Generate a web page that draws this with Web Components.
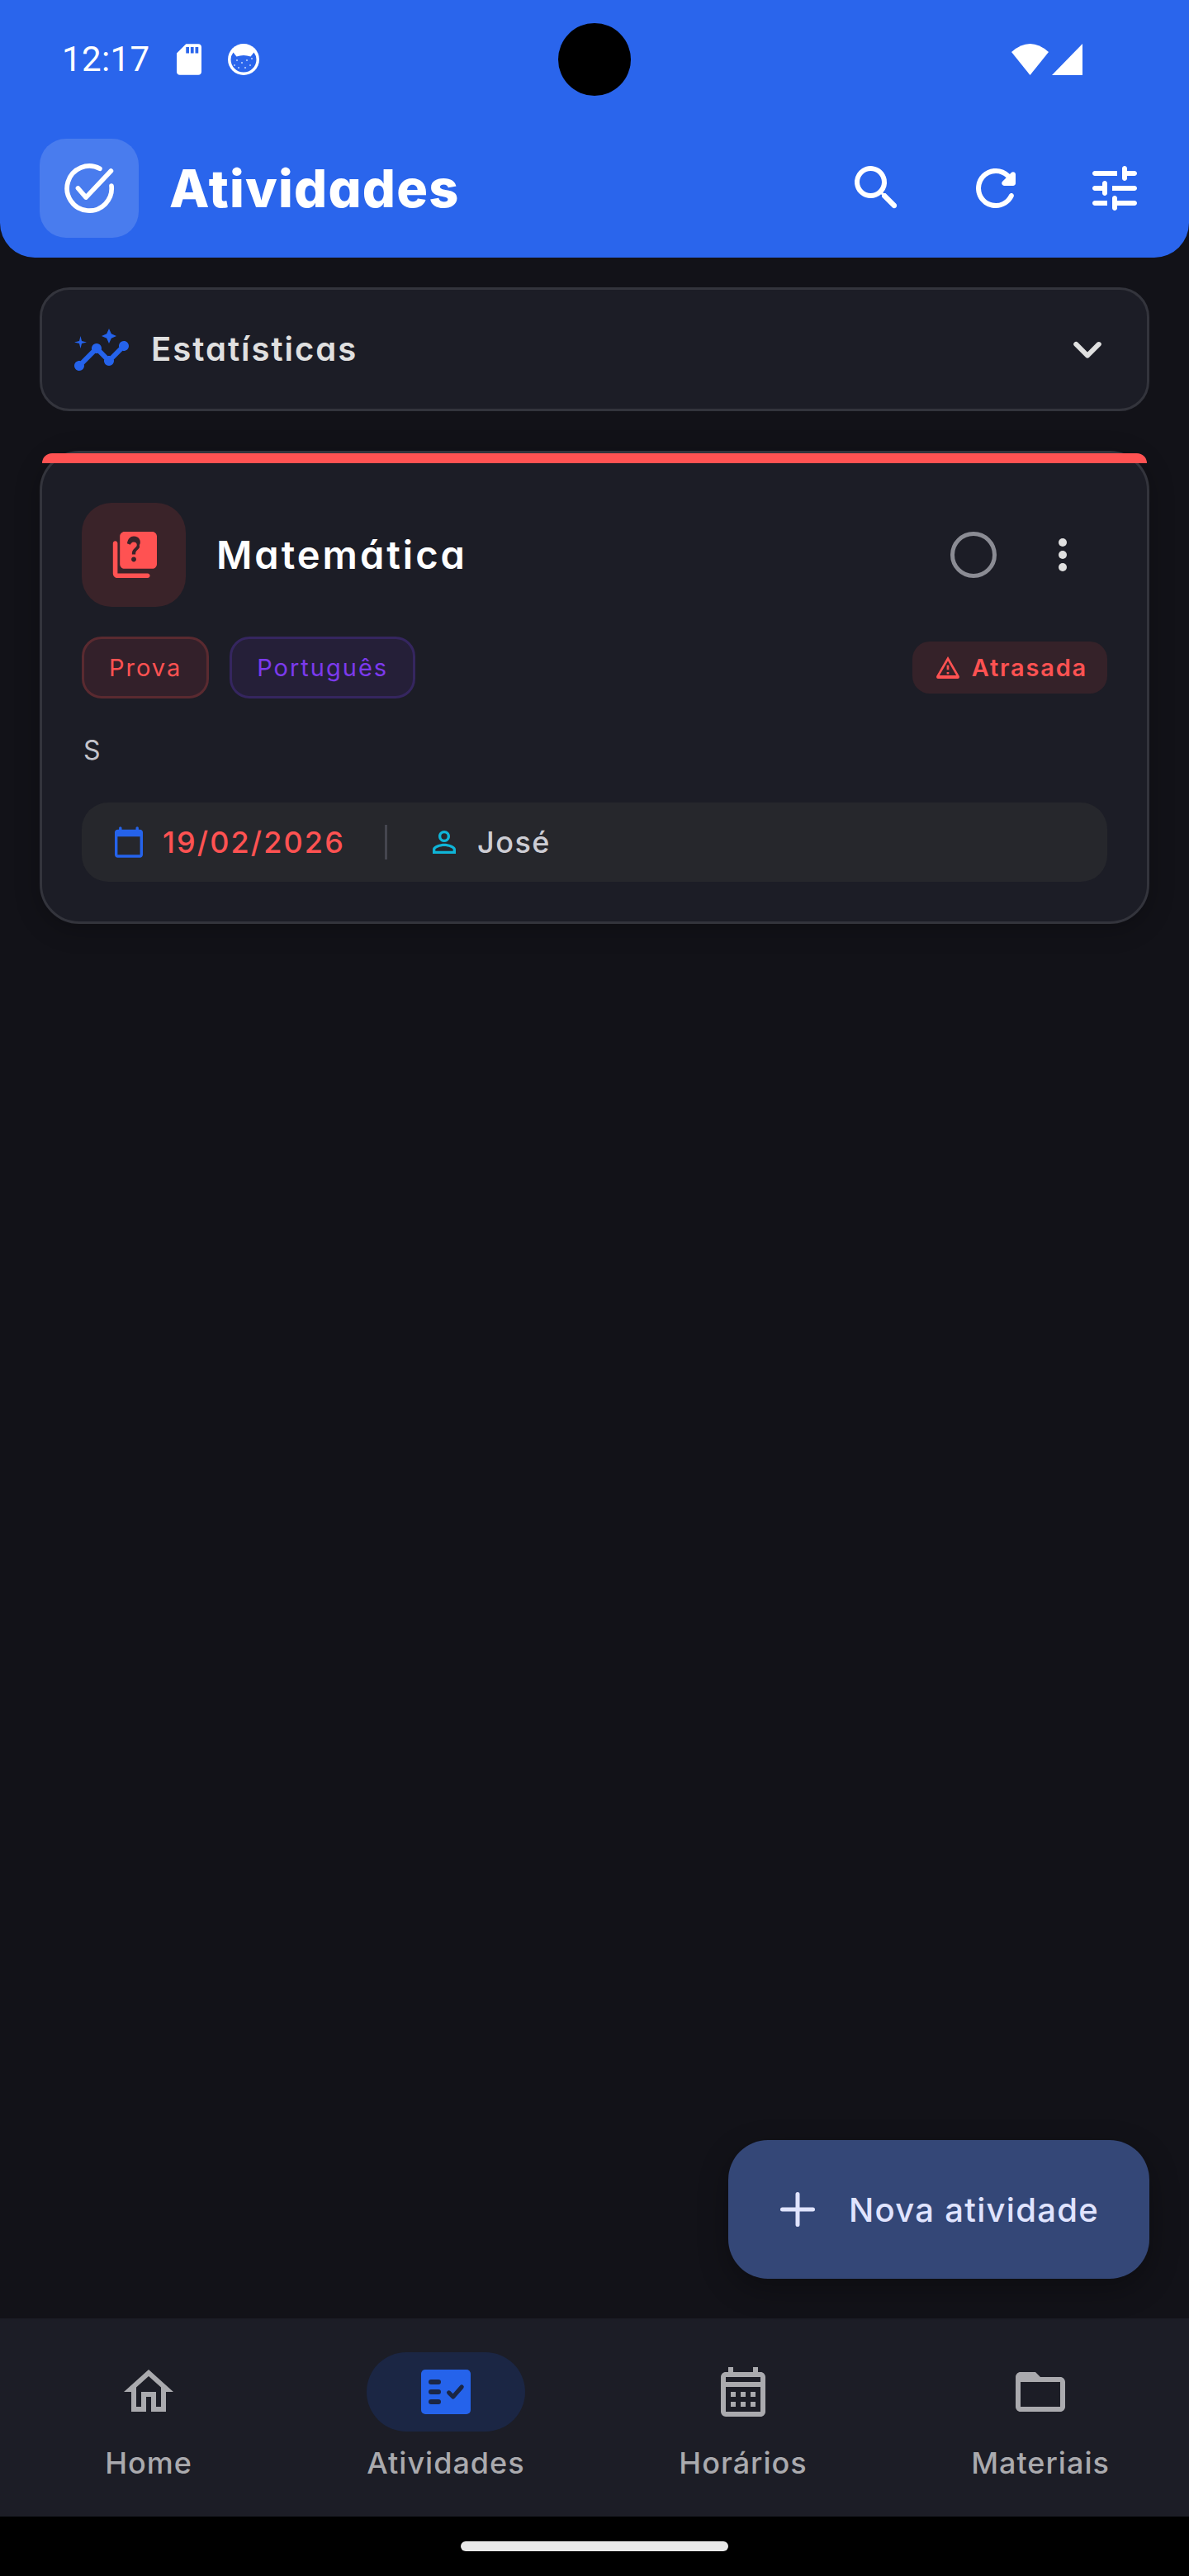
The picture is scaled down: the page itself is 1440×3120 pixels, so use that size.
<!DOCTYPE html>
<html lang="pt"><head><meta charset="utf-8"><title>Atividades</title>
<style>
html,body{margin:0;padding:0;background:#121218}
body{font-family:Inter,"Liberation Sans",sans-serif}
</style></head><body>
<x-app>
  <x-app-bar slot="top"></x-app-bar>
  <x-stats-card></x-stats-card>
  <x-task-card subject="Matemática" desc="S" date="19/02/2026" who="José"></x-task-card>
  <x-fab slot="fab">Nova atividade</x-fab>
  <x-bottom-nav slot="nav"></x-bottom-nav>
</x-app>
<script>
const P={
search:'M15.5 14h-.79l-.28-.27a6.5 6.5 0 0 0 1.48-5.34c-.47-2.78-2.79-5-5.59-5.34a6.505 6.505 0 0 0-7.27 7.27c.34 2.8 2.56 5.12 5.34 5.59a6.5 6.5 0 0 0 5.34-1.48l.27.28v.79l4.25 4.25c.41.41 1.08.41 1.49 0 .41-.41.41-1.08 0-1.49L15.5 14zm-6 0C7.01 14 5 11.99 5 9.5S7.01 5 9.5 5 14 7.01 14 9.5 11.99 14 9.5 14z',
refresh:'M17.65 6.35a7.95 7.95 0 0 0-6.48-2.31c-3.67.37-6.69 3.35-7.1 7.02C3.52 15.91 7.27 20 12 20a7.98 7.98 0 0 0 7.21-4.56c.32-.67-.16-1.44-.9-1.44-.37 0-.72.2-.88.53a5.994 5.994 0 0 1-6.8 3.31c-2.22-.49-4.01-2.3-4.48-4.52A6.002 6.002 0 0 1 12 6c1.66 0 3.14.69 4.22 1.78l-1.51 1.51c-.63.63-.19 1.71.7 1.71H19c.55 0 1-.45 1-1V6.41c0-.89-1.08-1.34-1.71-.71l-.64.65z',
tune:'M3 18c0 .55.45 1 1 1h5v-2H4c-.55 0-1 .45-1 1zM3 6c0 .55.45 1 1 1h9V5H4c-.55 0-1 .45-1 1zm10 14v-1h7c.55 0 1-.45 1-1s-.45-1-1-1h-7v-1c0-.55-.45-1-1-1s-1 .45-1 1v4c0 .55.45 1 1 1s1-.45 1-1zM7 10v1H4c-.55 0-1 .45-1 1s.45 1 1 1h3v1c0 .55.45 1 1 1s1-.45 1-1v-4c0-.55-.45-1-1-1s-1 .45-1 1zm14 2c0-.55-.45-1-1-1h-9v2h9c.55 0 1-.45 1-1zm-5-3c.55 0 1-.45 1-1V7h3c.55 0 1-.45 1-1s-.45-1-1-1h-3V4c0-.55-.45-1-1-1s-1 .45-1 1v4c0 .55.45 1 1 1z',
insights:'M21 8c-1.45 0-2.26 1.44-1.93 2.51l-3.55 3.56c-.3-.09-.74-.09-1.04 0l-2.55-2.55C12.27 10.45 11.46 9 10 9c-1.45 0-2.27 1.44-1.93 2.52l-4.56 4.55C2.44 15.74 1 16.55 1 18c0 1.1.9 2 2 2 1.45 0 2.26-1.44 1.93-2.51l4.55-4.56c.3.09.74.09 1.04 0l2.55 2.55C12.73 16.55 13.54 18 15 18c1.45 0 2.27-1.44 1.93-2.52l3.56-3.55c1.07.33 2.51-.48 2.51-1.93 0-1.1-.9-2-2-2zM15 9l.94-2.07L18 6l-2.06-.93L15 3l-.92 2.07L12 6l2.08.93zM3.5 11 4 9l2-.5L4 8l-.5-2L3 8l-2 .5L3 9z',
chevron:'M15.88 9.29 12 13.17 8.12 9.29a.996.996 0 1 0-1.41 1.41l4.59 4.59c.39.39 1.02.39 1.41 0l4.59-4.59a.996.996 0 0 0 0-1.41c-.39-.38-1.03-.39-1.42 0z',
quiz:'M4 6c-.55 0-1 .45-1 1v13c0 1.1.9 2 2 2h13c.55 0 1-.45 1-1s-.45-1-1-1H5V7c0-.55-.45-1-1-1zm16-4H8c-1.1 0-2 .9-2 2v12c0 1.1.9 2 2 2h12c1.1 0 2-.9 2-2V4c0-1.1-.9-2-2-2zm-7.99 13c-.59 0-1.05-.47-1.05-1.05 0-.59.47-1.04 1.05-1.04.59 0 1.04.45 1.04 1.04 0 .58-.45 1.05-1.04 1.05zm2.5-6.17c-.63.93-1.23 1.21-1.56 1.81-.13.24-.18.4-.18 1.18h-1.52c0-.41-.06-1.08.26-1.65.41-.73 1.18-1.16 1.63-1.8.48-.68.21-1.94-1.14-1.94-.88 0-1.32.67-1.5 1.23l-1.37-.58C9.51 5.03 10.54 4 11.99 4c1.21 0 2.04.55 2.46 1.24.36.59.57 1.7.01 2.59z',
warn:'M12 5.99 19.53 19H4.47L12 5.99M12 2 1.87 19.5c-.58 1 .14 2.5 1.3 2.5h17.66c1.16 0 1.88-1.5 1.3-2.5L12 2zm1 14h-2v2h2v-2zm0-6h-2v4h2v-4z',
cal:'M20 3h-1V2c0-.55-.45-1-1-1s-1 .45-1 1v1H7V2c0-.55-.45-1-1-1s-1 .45-1 1v1H4c-1.1 0-2 .9-2 2v16c0 1.1.9 2 2 2h16c1.1 0 2-.9 2-2V5c0-1.1-.9-2-2-2zm0 18H4V8h16v13z',
person:'M12 5.9a2.1 2.1 0 1 1 0 4.2 2.1 2.1 0 0 1 0-4.2m0 9c2.97 0 6.1 1.46 6.1 2.1v1.1H5.9V17c0-.64 3.13-2.1 6.1-2.1M12 4C9.79 4 8 5.79 8 8s1.79 4 4 4 4-1.79 4-4-1.79-4-4-4zm0 9c-2.67 0-8 1.34-8 4v3h16v-3c0-2.66-5.33-4-8-4z',
home:'m12 5.69 5 4.5V18h-2v-6H9v6H7v-7.81l5-4.5M12 3 2 12h3v8h6v-6h2v6h6v-8h3L12 3z',
month:'M19 4h-1V2h-2v2H8V2H6v2H5c-1.11 0-1.99.9-1.99 2L3 20a2 2 0 0 0 2 2h14c1.1 0 2-.9 2-2V6c0-1.1-.9-2-2-2zm0 16H5V10h14v10zm0-12H5V6h14v2zM9 14H7v-2h2v2zm4 0h-2v-2h2v2zm4 0h-2v-2h2v2zm-8 4H7v-2h2v2zm4 0h-2v-2h2v2zm4 0h-2v-2h2v2z',
folder:'M10 4H4c-1.1 0-1.99.9-1.99 2L2 18c0 1.1.9 2 2 2h16c1.1 0 2-.9 2-2V8c0-1.1-.9-2-2-2h-8l-2-2zm10 14H4V8h16v10z',
sd:'M18 2h-8L4.02 8 4 20c0 1.1.9 2 2 2h12c1.1 0 2-.9 2-2V4c0-1.1-.9-2-2-2zm-6 6h-2V4h2v4zm3 0h-2V4h2v4zm3 0h-2V4h2v4z'
};
const ico=(n,s,c,vb='0 0 24 24',h)=>`<svg width="${s}" height="${h||s}" viewBox="${vb}" fill="${c}" style="display:block;flex:none"><path d="${P[n]}"/></svg>`;
const def=(name,css,html)=>customElements.define(name,class extends HTMLElement{
  connectedCallback(){ if(this.shadowRoot) return; const r=this.attachShadow({mode:'open'});
    r.innerHTML=`<style>${css}</style>`+(typeof html==='function'?html(this):html); }
});
const TITLE='font-family:Inter,"Liberation Sans",sans-serif;font-feature-settings:"cv11" 1;';

def('x-app',`
:host{display:flex;flex-direction:column;width:1440px;height:3120px;position:relative;overflow:hidden;background:#121218;color:#e0e0e0}
main{flex:1;display:flex;flex-direction:column;gap:48px;padding:36px 48px 0;min-height:0}
.gest{height:72px;background:#000;display:flex;align-items:center;justify-content:center}
.gest i{display:block;width:324px;height:12px;border-radius:6px;background:#e9e9e9}
.cam{position:absolute;left:676px;top:28px;width:88px;height:88px;border-radius:50%;background:#000}
::slotted(x-fab){position:absolute;right:48px;top:2592px}
`,`<slot name="top"></slot><main><slot></slot></main><slot name="fab"></slot><slot name="nav"></slot><div class="gest"><i></i></div><div class="cam"></div>`);

def('x-status-bar',`
:host{display:flex;align-items:center;height:144px;padding:0 129px 0 75px;box-sizing:border-box;color:#fff}
.t{font:400 42px/1 Roboto,sans-serif;letter-spacing:.4px;width:139px}
.sd{margin-right:32px}
.sp{flex:1}
.w{margin-right:4px}
`,`<span class="t">12:17</span><span class="sd">${ico('sd',30,'#fff','4 2 16 20',38)}</span>
<svg width="38" height="38" viewBox="0 0 38 38" style="display:block"><circle cx="19" cy="19" r="19" fill="#fff"/><path d="M6.500 10.500L10.500 15.500Q19 12.500 27.500 15.500L31.500 10.500Q34.500 14.500 34.500 19A15.500 15.500 0 0 1 3.500 19Q3.500 14.500 6.500 10.500Z" fill="#2a65ec"/><g fill="#b9cffb"><circle cx="11" cy="20" r="1.100"/><circle cx="17" cy="23" r="1.100"/><circle cx="23" cy="20" r="1.100"/><circle cx="27" cy="26" r="1"/><circle cx="13" cy="29" r="1"/><circle cx="21" cy="29" r="1.100"/><circle cx="29" cy="18" r="1"/><circle cx="8" cy="26" r="1"/></g></svg>
<span class="sp"></span>
<svg class="w" width="45" height="38" viewBox="0 0 45 38" style="display:block"><path d="M0 10Q22.500-10 45 10L22.500 38Z" fill="#fff"/></svg>
<svg width="37" height="38" viewBox="0 0 37 38" style="display:block"><path d="M37 0V38H0Z" fill="#fff"/></svg>`);

def('x-app-bar',`
:host{display:block;height:312px;background:#2a65ec;border-radius:0 0 42px 42px;flex:none}
.bar{display:flex;align-items:center;height:120px;margin-top:24px;padding:0 54px 0 48px}
.logo{width:120px;height:120px;border-radius:32px;background:rgba(255,255,255,.15);display:flex;align-items:center;justify-content:center;flex:none}
h1{flex:1;margin:0 0 0 37px;${TITLE}font-weight:800;font-size:63px;line-height:72px;letter-spacing:1.200px;color:#fff}
.acts{display:flex;gap:72px}
`,`<x-status-bar></x-status-bar><div class="bar"><div class="logo"><svg width="72" height="72" viewBox="0 0 24 24" fill="none" stroke="#fff" stroke-width="1.900" stroke-linecap="round" stroke-linejoin="round"><path d="M16.300 4.100A9 9 0 1 0 21 11"/><path d="M7.500 12l3.200 3.700L20.800 5"/></svg></div><h1>Atividades</h1><div class="acts">${ico('search',72,'#fff')}${ico('refresh',72,'#fff')}${ico('tune',72,'#fff')}</div></div>`);

def('x-stats-card',`
:host{display:flex;align-items:center;height:150px;box-sizing:border-box;border:3px solid #33343c;border-radius:36px;background:#1c1d26;padding:0 36px 0 39px;flex:none}
span{flex:1;margin-left:27px;${TITLE}font-weight:600;font-size:40px;line-height:48px;letter-spacing:2px;color:#e0e0e0}
`,`${ico('insights',66,'#2563eb','1 3 22 17',51)}<span>Estatísticas</span>${ico('chevron',72,'#e0e0e0')}`);

def('x-chip',`
:host{display:flex;align-items:center;height:75px;box-sizing:border-box;padding:0 30px;border-radius:24px;border:3px solid var(--b);background:var(--g);color:var(--c);font-size:29px;letter-spacing:2px;font-weight:400;flex:none}
`,`<slot></slot>`);

def('x-task-card',`
:host{display:block;position:relative;box-sizing:border-box;border:3px solid #33343c;border-radius:48px;background:#1c1d26;padding:60px 48px 48px;flex:none;box-shadow:0 6px 30px rgba(0,0,0,.25)}
.strip{position:absolute;left:0;right:0;top:0;height:12px;background:#ff5252;border-radius:12px 12px 0 0}
.head{display:flex;align-items:center}
.ib{width:126px;height:126px;border-radius:36px;background:#3a2329;display:flex;align-items:center;justify-content:center;flex:none}
h2{flex:1;margin:0 0 0 37px;${TITLE}font-weight:600;font-size:47px;line-height:56px;letter-spacing:3px;color:#fff}
.more{width:108px;display:flex;flex-direction:column;align-items:center;gap:5px;margin-left:26px}
.more i{display:block;width:10px;height:10px;border-radius:50%;background:#e0e0e0}
.tags{display:flex;align-items:center;gap:25px;margin-top:36px}
.late{margin-left:auto;display:flex;align-items:center;height:63px;box-sizing:border-box;padding:0 24px 0 28px;border-radius:21px;background:#352229;color:#ff5252;font-weight:600;font-size:29px;letter-spacing:1.800px;gap:14px}
.d{margin:39px 2px 39px;font-size:32px;line-height:48px;color:#c4c4cc}
.meta{display:flex;align-items:center;height:96px;border-radius:32px;background:#26272c;padding-left:40px;font-size:36px;font-weight:500;letter-spacing:2.100px}
.date{color:#ff5252;margin-left:24px}
.sep{width:3px;height:42px;background:#45464f;margin:0 55px 0 48px}
.who{color:#cdcdd4;margin-left:26px;letter-spacing:1.500px}
`,h=>`<div class="strip"></div><div class="head"><div class="ib">${ico('quiz',56,'#ff5252','2 2 20 20')}</div><h2>${h.getAttribute('subject')}</h2><svg width="56" height="56" viewBox="0 0 56 56" style="flex:none"><circle cx="28" cy="28" r="25.500" fill="none" stroke="#8b8c94" stroke-width="5"/></svg><div class="more"><i></i><i></i><i></i></div></div>
<div class="tags"><x-chip style="--b:#5a2a30;--g:#33202a;--c:#ff5252">Prova</x-chip><x-chip style="--b:#35265f;--g:#251f38;--c:#7c3aed">Português</x-chip><div class="late">${ico('warn',30,'#ff5252','1 2 22 20',27)}<span>Atrasada</span></div></div>
<div class="d">${h.getAttribute('desc')}</div>
<div class="meta">${ico('cal',34,'#2563eb','2 1 20 22',38)}<span class="date">${h.getAttribute('date')}</span><i class="sep"></i>${ico('person',28,'#0fb5d8','4 4 16 16')}<span class="who">${h.getAttribute('who')}</span></div>`);

def('x-fab',`
:host{display:flex;align-items:center;width:510px;height:168px;box-sizing:border-box;padding-left:63px;gap:41px;border-radius:48px;background:#344777;color:#e0e4ff;font-size:40px;font-weight:500;letter-spacing:1.300px;box-shadow:0 12px 36px rgba(0,0,0,.3)}
`,`<svg width="42" height="42" viewBox="0 0 42 42" style="flex:none"><path d="M21 2.500v37M2.500 21h37" stroke="#e0e4ff" stroke-width="5" stroke-linecap="round"/></svg><slot></slot>`);

def('x-nav-item',`
:host{display:flex;flex-direction:column;align-items:center;padding-top:41px}
.pill{width:192px;height:96px;border-radius:48px;display:flex;align-items:center;justify-content:center}
:host([active]) .pill{background:#1b2644}
.l{margin-top:14px;font-size:36px;line-height:48px;font-weight:500;color:#aaaaae;letter-spacing:1px}
`,`<div class="pill"><slot></slot></div><div class="l"></div>`);

def('x-bottom-nav',`
:host{display:grid;grid-template-columns:repeat(4,1fr);height:240px;background:#1c1d26;flex:none}
`,`<x-nav-item data-l="Home">${ico('home',72,'#aaaaae')}</x-nav-item>
<x-nav-item active data-l="Atividades"><svg width="72" height="72" viewBox="0 0 24 24"><rect x="2" y="3" width="20" height="18" rx="1.700" fill="#2563eb"/><g fill="#1b2644"><rect x="5" y="7" width="5" height="2" rx="1"/><rect x="5" y="11" width="5" height="2" rx="1"/><rect x="5" y="15" width="5" height="2" rx="1"/></g><path d="M13.200 12.300l1.700 1.700 3.500-4" fill="none" stroke="#1b2644" stroke-width="1.700" stroke-linecap="round" stroke-linejoin="round"/></svg></x-nav-item>
<x-nav-item data-l="Horários">${ico('month',72,'#aaaaae')}</x-nav-item>
<x-nav-item data-l="Materiais">${ico('folder',72,'#aaaaae')}</x-nav-item>`);
document.querySelector('x-bottom-nav').shadowRoot.querySelectorAll('x-nav-item').forEach(n=>{n.shadowRoot.querySelector('.l').textContent=n.dataset.l;});
</script>
</body></html>
